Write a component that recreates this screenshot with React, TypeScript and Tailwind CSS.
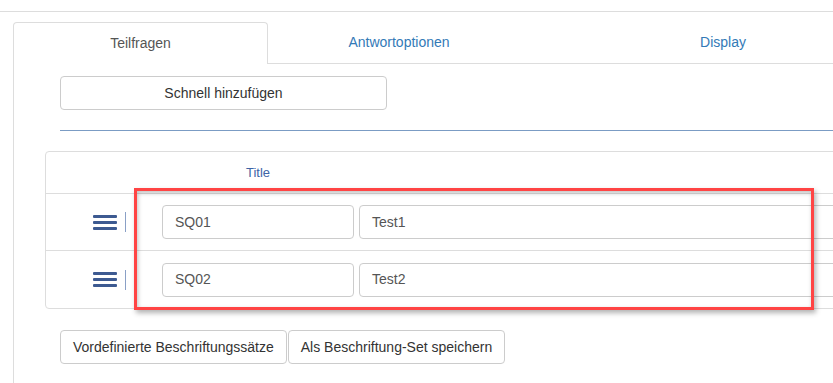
import React from 'react';

const rows = [
  { code: 'SQ01', title: 'Test1' },
  { code: 'SQ02', title: 'Test2' },
];

const DragHandle: React.FC = () => (
  <div className="flex items-center gap-[8px]">
    <div className="flex flex-col gap-[3px]">
      <span className="block w-[24px] h-[3px] bg-[#3d5a91] rounded-[1px]" />
      <span className="block w-[24px] h-[3px] bg-[#3d5a91] rounded-[1px]" />
      <span className="block w-[24px] h-[3px] bg-[#3d5a91] rounded-[1px]" />
    </div>
    <span className="block w-px h-[20px] bg-[#8aa0c6]" />
  </div>
);

const App: React.FC = () => {
  return (
    <div className="relative w-[833px] h-[383px] overflow-hidden bg-white font-['Liberation_Sans',Arial,sans-serif] text-[14px]">
      <div className="mt-[11px] border-t border-[#dddddd]" />

      {/* tabs */}
      <div className="mt-[10px] ml-[13px] flex w-[1000px] h-[42px]">
        <div className="w-[255px] flex items-center justify-center border border-b-0 border-[#dddddd] rounded-t-[4px] text-[#555555] bg-white">
          Teilfragen
        </div>
        <div className="w-[262px] flex items-center justify-center border-b border-[#dddddd] text-[#337ab7]">
          Antwortoptionen
        </div>
        <div className="w-[386px] flex items-center justify-center border-b border-[#dddddd] text-[#337ab7]">
          Display
        </div>
        <div className="flex-1 border-b border-[#dddddd]" />
      </div>

      {/* tab content */}
      <div className="ml-[13px] w-[1000px] border-l border-[#dddddd] pl-[31px] pt-[12px] pb-[40px]">
        <div className="pl-[15px]">
          <button className="w-[327px] h-[34px] border border-[#cccccc] rounded-[4px] bg-white text-[#333333]">
            Schnell hinzufügen
          </button>
          <div className="mt-[20px] border-t border-[#7b9cc4]" />
        </div>

        <div className="mt-[20px] border border-[#dddddd] rounded-[4px]">
          <div className="flex h-[42px] items-center border-b border-[#dddddd]">
            <div className="w-[116px]" />
            <div className="w-[192px] text-center text-[13px] text-[#3e64a6]">Title</div>
          </div>
          {rows.map((r, i) => (
            <div
              key={r.code}
              className={`flex h-[57px] items-center ${i < rows.length - 1 ? 'border-b border-[#dddddd]' : ''}`}
            >
              <div className="w-[116px] flex justify-end pr-[36px]">
                <DragHandle />
              </div>
              <div className="w-[192px] h-[34px] border border-[#cccccc] rounded-[4px] flex items-center px-[12px] text-[#555555]">
                {r.code}
              </div>
              <div className="ml-[5px] flex-1 h-[34px] border border-[#cccccc] rounded-[4px] flex items-center px-[12px] text-[#555555]">
                {r.title}
              </div>
            </div>
          ))}
        </div>

        <div className="mt-[21px] pl-[15px] flex gap-px">
          <button className="h-[34px] px-[12px] border border-[#cccccc] rounded-[4px] bg-white text-[#333333]">
            Vordefinierte Beschriftungssätze
          </button>
          <button className="h-[34px] px-[12px] border border-[#cccccc] rounded-[4px] bg-white text-[#333333]">
            Als Beschriftung-Set speichern
          </button>
        </div>
      </div>

      {/* highlight marker */}
      <div className="absolute left-[134px] top-[188px] w-[680px] h-[122px] border-[3px] border-[#ff4444] shadow-[2px_3px_5px_rgba(0,0,0,0.3),inset_1px_2px_4px_rgba(0,0,0,0.25)]" />
    </div>
  );
};

export default App;
